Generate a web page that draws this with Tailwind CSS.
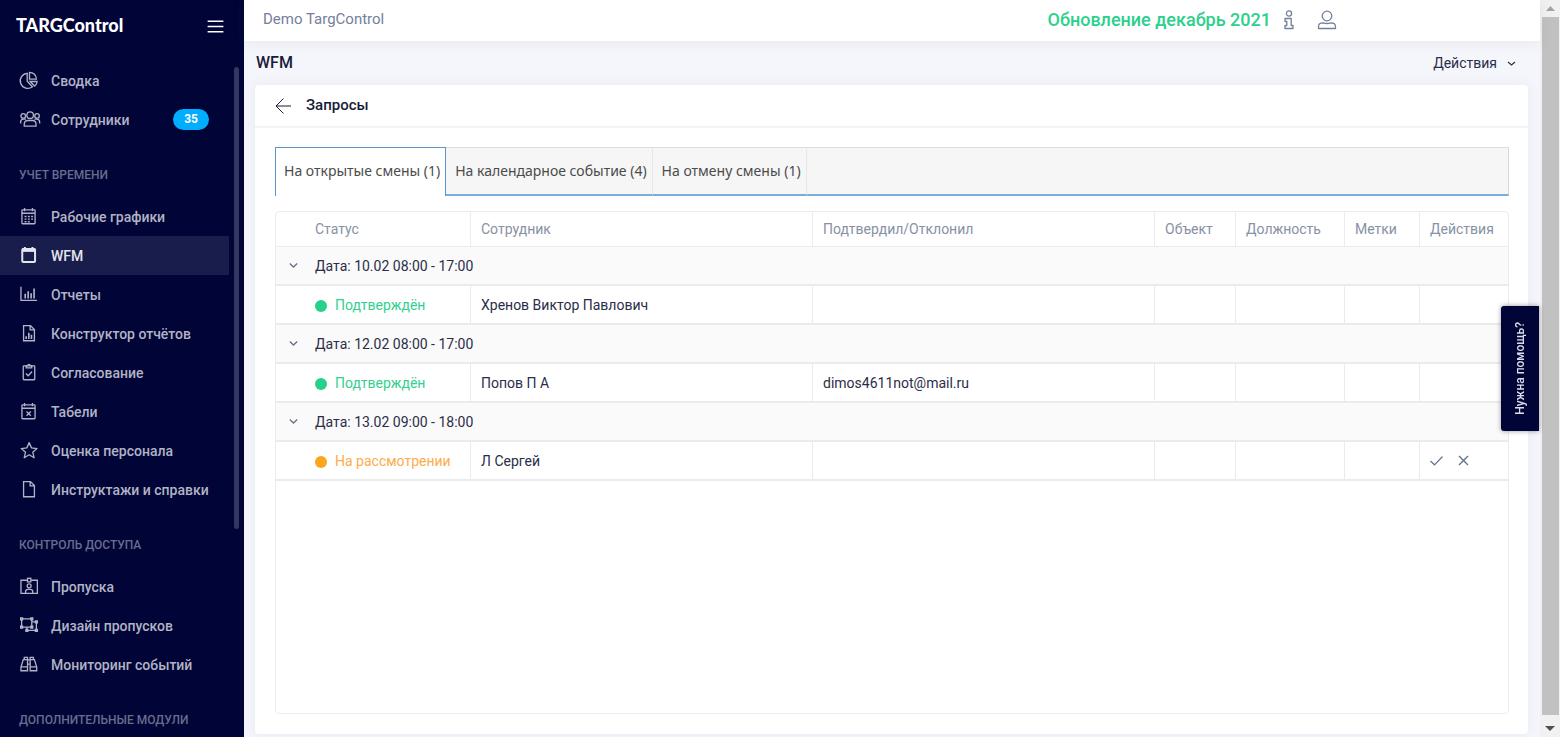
<!DOCTYPE html>
<html lang="ru">
<head>
<meta charset="utf-8">
<title>TARGControl – WFM</title>
<script src="https://cdn.jsdelivr.net/npm/@tailwindcss/browser@4"></script>
</head>
<body class="font-['Roboto','Noto_Sans',sans-serif] text-sm text-[#2b2d49]">
<div class="flex h-screen overflow-hidden bg-[#f5f6fb]">

  <aside class="relative flex w-[244px] shrink-0 flex-col overflow-hidden bg-[#000437] text-[#b2b3c4]">
    <div class="flex h-[61px] shrink-0 items-start justify-between pt-[13px] pr-[18px] pl-4">
      <a href="#" class="font-['Lato',sans-serif] text-lg leading-6 font-black text-white">TARGControl</a>
      <button type="button" aria-label="Меню" class="mt-[3px] text-white"><svg class="size-[21px]" viewBox="0 0 32 32" fill="currentColor"><path d="M4 7h24v2H4zM4 15h24v2H4zM4 23h24v2H4z"/></svg></button>
    </div>
    <nav class="mr-[15px] font-medium">
      <a href="#" class="flex h-[39px] items-center gap-3 pl-[18px]">
        <svg class="size-[21px]" viewBox="0 0 32 32" fill="none" stroke="currentColor" stroke-width="2"><path d="M14 5A11.500 11.500 0 1 0 22 25.500L14 17Z"/><path d="M17.500 3.500V14H28C28 8 23.500 3.500 17.500 3.500Z"/><path d="M18.500 17.500H29C29 20.500 27.500 23 25.500 24.500Z"/></svg>Сводка</a>
      <a href="#" class="flex h-[39px] items-center gap-3 pl-[18px]">
        <svg class="size-[21px] overflow-visible" viewBox="0 0 32 32" fill="none" stroke="currentColor" stroke-width="2"><circle cx="18.500" cy="9.500" r="5"/><circle cx="8" cy="10.500" r="3.500"/><circle cx="29" cy="10.500" r="3.500"/><path d="M4 22V20Q4 15.500 8.500 15.500H12M33 22V20Q33 15.500 28.500 15.500H25"/><path d="M9.500 26V23.500Q9.500 17.500 15 17.500H22Q27.500 17.500 27.500 23.500V26Z"/></svg>Сотрудники
        <span class="mr-5 ml-auto rounded-full bg-[#00adff] px-[11px] text-xs leading-[21px] font-bold text-white">35</span></a>

      <h2 class="h-[58px] pt-7 pl-[19px] text-xs leading-4 text-[#6a6c8c]">УЧЕТ ВРЕМЕНИ</h2>
      <a href="#" class="flex h-[39px] items-center gap-3 pl-[18px]">
        <svg class="size-[21px]" viewBox="0 0 32 32" fill="none" stroke="currentColor" stroke-width="2"><rect x="6" y="6" width="20" height="21" rx="1"/><path d="M10 3v5M22 3v5M6 11H26"/><path d="M10 16H23M10 20H23M10 24H19" stroke-dasharray="3 2"/></svg>Рабочие графики</a>
      <a href="#" class="flex h-[39px] items-center gap-3 bg-[#191d4b] pl-[18px] text-[#e4e5ed]">
        <svg class="size-[21px]" viewBox="0 0 32 32" fill="none" stroke="currentColor" stroke-width="3"><rect x="6.500" y="6" width="19.500" height="20" rx="1.500"/><path d="M10.500 3v4M22 3v4"/><path d="M6 8H26.500" stroke-width="5"/></svg>WFM</a>
      <a href="#" class="flex h-[39px] items-center gap-3 pl-[18px]">
        <svg class="size-[21px]" viewBox="0 0 32 32" fill="none" stroke="currentColor" stroke-width="2"><path d="M4.500 4V25H29"/><path d="M11 15V22M15.500 11V22M20 14V22M24.500 7V22" stroke-width="2.500"/></svg>Отчеты</a>
      <a href="#" class="flex h-[39px] items-center gap-3 pl-[18px]">
        <svg class="size-[21px]" viewBox="0 0 32 32" fill="none" stroke="currentColor" stroke-width="2"><path d="M8.500 4H19L25 10V27H8.500ZM18.500 4V10.500H25"/><path d="M12.500 20V24.500M16.500 15V24.500M20.500 18V24.500" stroke-width="2.500"/></svg>Конструктор отчётов</a>
      <a href="#" class="flex h-[39px] items-center gap-3 pl-[18px]">
        <svg class="size-[21px]" viewBox="0 0 32 32" fill="none" stroke="currentColor" stroke-width="2"><rect x="8" y="6" width="17.500" height="21" rx="1"/><path d="M12.500 5.500H15Q15 3.500 16.700 3.500T18.500 5.500H21V9H12.500Z"/><path d="M12 17.500L15.500 21L21.500 14.500"/></svg>Согласование</a>
      <a href="#" class="flex h-[39px] items-center gap-3 pl-[18px]">
        <svg class="size-[21px]" viewBox="0 0 32 32" fill="none" stroke="currentColor" stroke-width="2"><rect x="6" y="6" width="20" height="21" rx="1"/><path d="M10 3v5M22 3v5M6 11H26M13 16L19.500 22.500M19.500 16L13 22.500"/></svg>Табели</a>
      <a href="#" class="flex h-[39px] items-center gap-3 pl-[18px]">
        <svg class="size-[21px]" viewBox="0 0 32 32" fill="none" stroke="currentColor" stroke-width="2" stroke-linejoin="round"><path d="M17 4L20.500 12L29 13L22.500 18.500L24.500 27L17 22.500L9.500 27L11.500 18.500L5 13L13.500 12Z"/></svg>Оценка персонала</a>
      <a href="#" class="flex h-[39px] items-center gap-3 pl-[18px]">
        <svg class="size-[21px]" viewBox="0 0 32 32" fill="none" stroke="currentColor" stroke-width="2"><path d="M8.500 4H19L25 10V27H8.500ZM18.500 4V10.500H25"/></svg>Инструктажи и справки</a>

      <h2 class="h-[58px] pt-7 pl-[19px] text-xs leading-4 text-[#6a6c8c]">КОНТРОЛЬ ДОСТУПА</h2>
      <a href="#" class="flex h-[39px] items-center gap-3 pl-[18px]">
        <svg class="size-[21px]" viewBox="0 0 32 32" fill="none" stroke="currentColor" stroke-width="2"><path d="M14 6.500H4.500V26.500H29.500V6.500H20"/><rect x="14.500" y="3.500" width="5" height="5.500"/><circle cx="17" cy="15" r="3"/><path d="M11.500 26V24Q11.500 20.500 15 20.500H19Q22.500 20.500 22.500 24V26"/></svg>Пропуска</a>
      <a href="#" class="flex h-[39px] items-center gap-3 pl-[18px]">
        <svg class="size-[21px]" viewBox="0 0 32 32" fill="none" stroke="currentColor" stroke-width="2"><path d="M5.500 6H21V18.500H5.500ZM22 10.500H28V23.500H13.500V19"/><path d="M3 3.500h5v5h-5zM18.500 3.500h5v5h-5zM3 16h5v5h-5zM18.500 16h5v5h-5zM25.500 8h5v5h-5zM25.500 21h5v5h-5zM11 21h5v5h-5z" fill="currentColor" stroke="none"/></svg>Дизайн пропусков</a>
      <a href="#" class="flex h-[39px] items-center gap-3 pl-[18px]">
        <svg class="size-[21px]" viewBox="0 0 32 32" fill="none" stroke="currentColor" stroke-width="2"><path d="M9.500 5H14.500V25.500H4.500V20L8 8.500H9.500ZM23.500 5H18.500V25.500H28.500V20L25 8.500H23.500ZM4.500 19.500H14.500M18.500 19.500H28.500M14.500 9H18.500M14.500 15.500H18.500M9.500 8.500H14M19 8.500H24"/></svg>Мониторинг событий</a>

      <h2 class="h-[58px] pt-7 pl-[19px] text-xs leading-4 text-[#6a6c8c]">ДОПОЛНИТЕЛЬНЫЕ МОДУЛИ</h2>
    </nav>
    <div class="absolute top-[67px] right-[5px] h-[462px] w-[5px] rounded-full bg-[#33365f]"></div>
  </aside>

  <main class="flex min-w-0 flex-1 flex-col">
    <header class="z-10 flex h-[41px] shrink-0 items-center bg-white pr-[203px] pb-[2px] pl-[19px] shadow-[0_1px_12px_rgba(80,85,140,0.10)]">
      <span class="text-[15px] text-[#74809a]">Demo TargControl</span>
      <a href="#" class="ml-auto text-lg leading-6 font-medium text-[#2dd08c]">Обновление декабрь 2021</a>
      <button type="button" aria-label="Информация" class="ml-3 text-[#74809a]"><svg class="h-5 w-3" viewBox="0 0 12 20" fill="none" stroke="currentColor" stroke-width="1.300"><circle cx="6" cy="3.500" r="2.600"/><path d="M2 8.500H8.200V15.500H10V18.500H2V15.500H3.800V11.500H2Z" stroke-linejoin="round"/></svg></button>
      <button type="button" aria-label="Профиль" class="ml-[22px] text-[#74809a]"><svg class="size-5" viewBox="0 0 20 20" fill="none" stroke="currentColor" stroke-width="1.300"><circle cx="10" cy="6" r="4.800"/><path d="M1.500 18.500V16.500Q1.500 12.800 6 12.800Q10 14.200 14 12.800Q18.500 12.800 18.500 16.500V18.500Z" stroke-linejoin="round"/></svg></button>
    </header>

    <div class="flex h-11 shrink-0 items-center justify-between pr-6 pl-3">
      <h1 class="text-base font-medium text-[#191b38]">WFM</h1>
      <button type="button" class="flex items-center gap-[10px]">Действия
        <svg class="h-[9px] w-[9px]" viewBox="0 0 9 9" fill="none" stroke="currentColor" stroke-width="1.200"><path d="M1 3L4.500 6L8 3"/></svg></button>
    </div>

    <section class="mr-3 mb-[3px] ml-[11px] flex min-h-0 flex-1 flex-col rounded bg-white shadow-[0_0_12px_rgba(80,85,140,0.08)]">
      <div class="flex h-[43px] shrink-0 items-center gap-[15px] border-b-2 border-[#f4f4f6] pl-5 text-[#191b38]">
        <button type="button" aria-label="Назад"><svg class="h-4 w-4" viewBox="0 0 16 16" fill="none" stroke="currentColor" stroke-width="1"><path d="M8.500 .5L1 8L8.500 15.500M1 8H16"/></svg></button>
        <h2 class="text-[15px] font-medium">Запросы</h2>
      </div>

      <div class="flex min-h-0 flex-1 flex-col pt-[19px] pr-[19px] pb-5 pl-5">
        <div role="tablist" class="flex h-[49px] shrink-0 font-['Noto_Sans','Open_Sans',sans-serif] text-[#4b4b4b]">
          <button type="button" role="tab" aria-selected="true" class="border-x border-t border-[#5b96cb] bg-white pr-[5px] pb-[2px] pl-2">На открытые смены (1)</button>
          <button type="button" role="tab" aria-selected="false" class="border-t border-r border-b-2 border-t-[#dddddd] border-r-[#e8e8e8] border-b-[#79addb] bg-[#f6f6f6] pr-[5px] pl-[9px]">На календарное событие (4)</button>
          <button type="button" role="tab" aria-selected="false" class="border-t border-r border-b-2 border-t-[#dddddd] border-r-[#e8e8e8] border-b-[#79addb] bg-[#f6f6f6] pr-[5px] pl-[9px]">На отмену смены (1)</button>
          <div class="flex-1 border-t border-r border-b-2 border-t-[#dddddd] border-r-[#d8d8d8] border-b-[#79addb] bg-[#f6f6f6]"></div>
        </div>

        <div class="mt-[15px] min-h-0 flex-1 overflow-hidden rounded border border-[#ebecf0]">
          <table class="w-full table-fixed border-separate border-spacing-0 text-left">
            <colgroup><col class="w-[195px]"><col><col><col class="w-[81px]"><col class="w-[109px]"><col class="w-[75px]"><col class="w-[88px]"></colgroup>
            <thead>
              <tr class="h-[35px] text-[#8791a5] *:border-b *:border-[#ebecf0] *:font-normal">
                <th class="border-r pl-[39px]">Статус</th><th class="border-r pl-[10px]">Сотрудник</th><th class="border-r pl-[10px]">Подтвердил/Отклонил</th><th class="border-r pl-[10px]">Объект</th><th class="border-r pl-[10px]">Должность</th><th class="border-r pl-[10px]">Метки</th><th class="pl-[10px]">Действия</th>
              </tr>
            </thead>
            <tbody class="[&_td]:border-b-2 [&_td]:border-[#ebebed]">
              <tr class="h-[39px] bg-[#fafafa]"><td colspan="7" class="pl-[13px]"><button type="button" class="flex items-center gap-[17px]"><svg class="h-[9px] w-[9px]" viewBox="0 0 9 9" fill="none" stroke="#65728a" stroke-width="1.300"><path d="M.8 2.500L4.500 6L8.200 2.500"/></svg>Дата: 10.02 08:00 - 17:00</button></td></tr>
              <tr class="h-[39px]"><td class="border-r pl-[39px]"><span class="flex items-center gap-2 text-[#35cf8f]"><i class="mt-[2px] size-3 rounded-full bg-[#27d08b]"></i>Подтверждён</span></td><td class="border-r pl-[10px]">Хренов Виктор Павлович</td><td class="border-r"></td><td class="border-r"></td><td class="border-r"></td><td class="border-r"></td><td></td></tr>
              <tr class="h-[39px] bg-[#fafafa]"><td colspan="7" class="pl-[13px]"><button type="button" class="flex items-center gap-[17px]"><svg class="h-[9px] w-[9px]" viewBox="0 0 9 9" fill="none" stroke="#65728a" stroke-width="1.300"><path d="M.8 2.500L4.500 6L8.200 2.500"/></svg>Дата: 12.02 08:00 - 17:00</button></td></tr>
              <tr class="h-[39px]"><td class="border-r pl-[39px]"><span class="flex items-center gap-2 text-[#35cf8f]"><i class="mt-[2px] size-3 rounded-full bg-[#27d08b]"></i>Подтверждён</span></td><td class="border-r pl-[10px]">Попов П А</td><td class="border-r pl-[10px]">dimos4611not@mail.ru</td><td class="border-r"></td><td class="border-r"></td><td class="border-r"></td><td></td></tr>
              <tr class="h-[39px] bg-[#fafafa]"><td colspan="7" class="pl-[13px]"><button type="button" class="flex items-center gap-[17px]"><svg class="h-[9px] w-[9px]" viewBox="0 0 9 9" fill="none" stroke="#65728a" stroke-width="1.300"><path d="M.8 2.500L4.500 6L8.200 2.500"/></svg>Дата: 13.02 09:00 - 18:00</button></td></tr>
              <tr class="h-[39px]"><td class="border-r pl-[39px]"><span class="flex items-center gap-2 text-[#fbac4b]"><i class="mt-[2px] size-3 rounded-full bg-[#faa61f]"></i>На рассмотрении</span></td><td class="border-r pl-[10px]">Л Сергей</td><td class="border-r"></td><td class="border-r"></td><td class="border-r"></td><td class="border-r"></td>
                <td class="pl-[10px]"><div class="flex items-center gap-[15px] text-[#65728a]">
                  <button type="button" aria-label="Подтвердить"><svg class="h-[11px] w-[13px]" viewBox="0 0 13 11" fill="none" stroke="currentColor" stroke-width="1.200"><path d="M.5 6L4.500 9.800L12.500 1.500"/></svg></button>
                  <button type="button" aria-label="Отклонить"><svg class="h-[11px] w-[11px]" viewBox="0 0 11 11" fill="none" stroke="currentColor" stroke-width="1.400"><path d="M1 1L10 10M10 1L1 10"/></svg></button></div></td></tr>
            </tbody>
          </table>
        </div>
      </div>
    </section>
  </main>

  <div aria-hidden="true" class="flex w-5 shrink-0 flex-col items-center bg-[#f1f1f1]">
    <svg class="h-[17px] w-[9px]" viewBox="0 0 9 17"><path d="M0 11L4.500 6L9 11Z" fill="#a3a3a3"/></svg>
    <div class="w-[17px] flex-1 bg-[#c1c1c1]"></div>
    <svg class="h-[22px] w-[10px]" viewBox="0 0 10 22"><path d="M0 11H10L5 16Z" fill="#505050"/></svg>
  </div>
</div>

<button type="button" class="fixed top-[306px] right-[21px] z-20 flex h-[125px] w-[38px] items-center justify-center rounded-l-[3px] bg-[#000437] text-xs font-medium text-[#dcdde8] shadow-[0_0_5px_rgba(0,0,0,0.4)]"><span class="rotate-180 [writing-mode:vertical-rl]">Нужна помощь?</span></button>
</body>
</html>
